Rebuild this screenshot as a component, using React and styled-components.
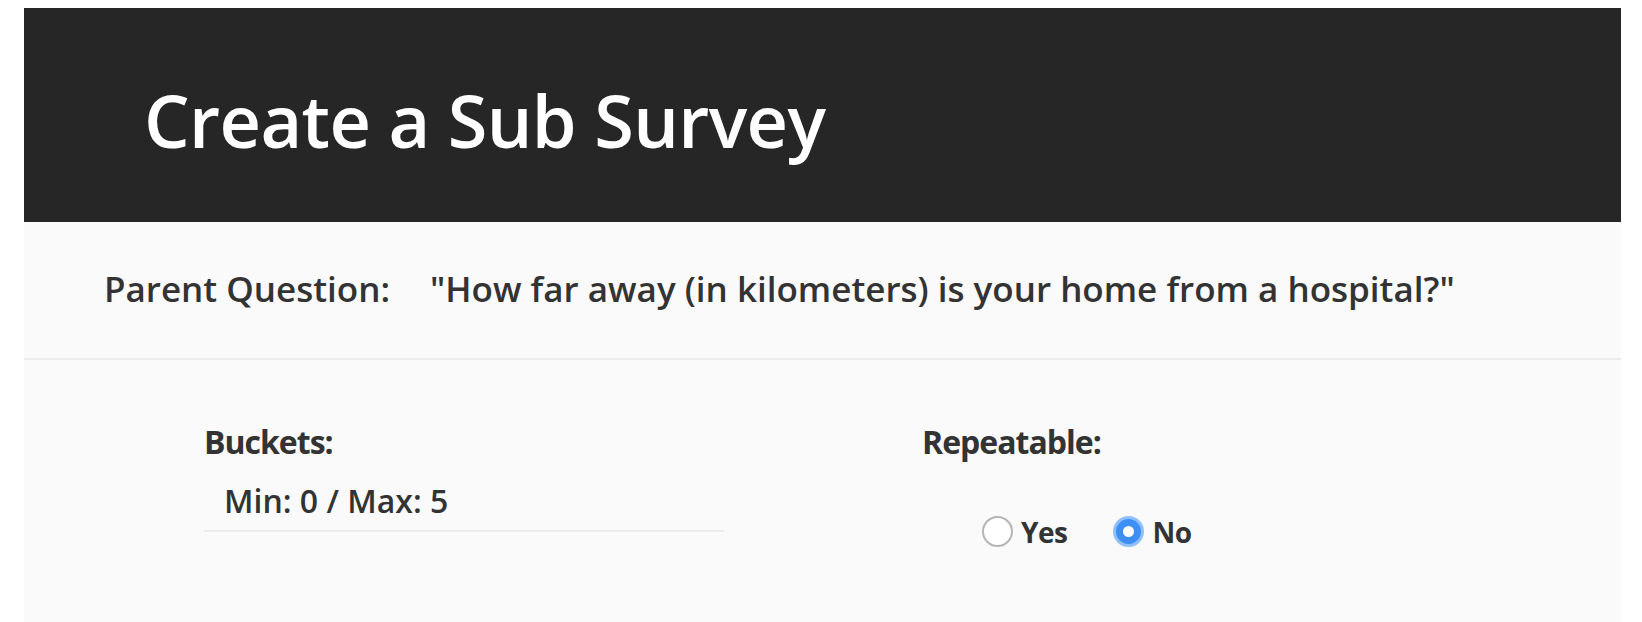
import React from "react";
import styled, { createGlobalStyle } from "styled-components";

const Global = createGlobalStyle`
  html, body { margin: 0; padding: 0; background: #ffffff; }
  body { font-family: "Open Sans", "Noto Sans", sans-serif; color: #333333; }
  * { box-sizing: border-box; }
`;

const Page = styled.div`
  padding: 8px 21px 0 24px;
`;

const Header = styled.header`
  height: 214px;
  background: #262626;
  padding: 76px 0 0 120px;
`;

const Title = styled.h1`
  margin: 0;
  font-size: 72px;
  line-height: 1;
  font-weight: 600;
  color: #ffffff;
  letter-spacing: -0.6px;
`;

const QuestionBar = styled.section`
  height: 138px;
  background: #fafafa;
  border-bottom: 2px solid #ececec;
  padding: 49px 0 0 80px;
  display: flex;
  gap: 40px;
  font-size: 35px;
  line-height: 1;
  font-weight: 600;
  color: #333333;
  letter-spacing: 0;
`;

const Content = styled.section`
  background: #fafafa;
  min-height: 262px;
  padding: 66px 0 0 180px;
  display: grid;
  grid-template-columns: 718px 1fr;
`;

const Field = styled.div`
  display: flex;
  flex-direction: column;
  align-items: flex-start;
`;

const Label = styled.div`
  font-size: 32px;
  line-height: 1;
  font-weight: 700;
  color: #333333;
  letter-spacing: -1px;
`;

const Value = styled.div`
  width: 520px;
  margin-top: 27px;
  padding: 0 0 13px 20px;
  border-bottom: 2px solid #ececec;
  font-size: 32px;
  line-height: 1;
  font-weight: 600;
  color: #333333;
  letter-spacing: 0;
`;

const RadioGroup = styled.div`
  display: flex;
  align-items: center;
  gap: 46px;
  margin: 58px 0 0 60px;
`;

const RadioOption = styled.label`
  display: flex;
  align-items: center;
  gap: 8px;
  font-size: 28px;
  line-height: 1;
  font-weight: 700;
  color: #333333;
  letter-spacing: -0.5px;
`;

const RadioCircle = styled.span`
  width: 31px;
  height: 31px;
  border-radius: 50%;
  display: inline-flex;
  align-items: center;
  justify-content: center;
  background: ${(p) => (p.$checked ? "#3d8ff5" : "#ffffff")};
  border: ${(p) => (p.$checked ? "3px solid #8fc0fa" : "2px solid #b5b5b5")};
  &::after {
    content: "";
    display: ${(p) => (p.$checked ? "block" : "none")};
    width: 11px;
    height: 11px;
    border-radius: 50%;
    background: #ffffff;
  }
`;

function Radio({ label, checked }) {
  return (
    <RadioOption>
      <RadioCircle $checked={checked} />
      {label}
    </RadioOption>
  );
}

export default function App() {
  return (
    <>
      <Global />
      <Page>
        <Header>
          <Title>Create a Sub Survey</Title>
        </Header>
        <QuestionBar>
          <span>Parent Question:</span>
          <span>"How far away (in kilometers) is your home from a hospital?"</span>
        </QuestionBar>
        <Content>
          <Field>
            <Label>Buckets:</Label>
            <Value>Min: 0 / Max: 5</Value>
          </Field>
          <Field>
            <Label>Repeatable:</Label>
            <RadioGroup>
              <Radio label="Yes" />
              <Radio label="No" checked />
            </RadioGroup>
          </Field>
        </Content>
      </Page>
    </>
  );
}
